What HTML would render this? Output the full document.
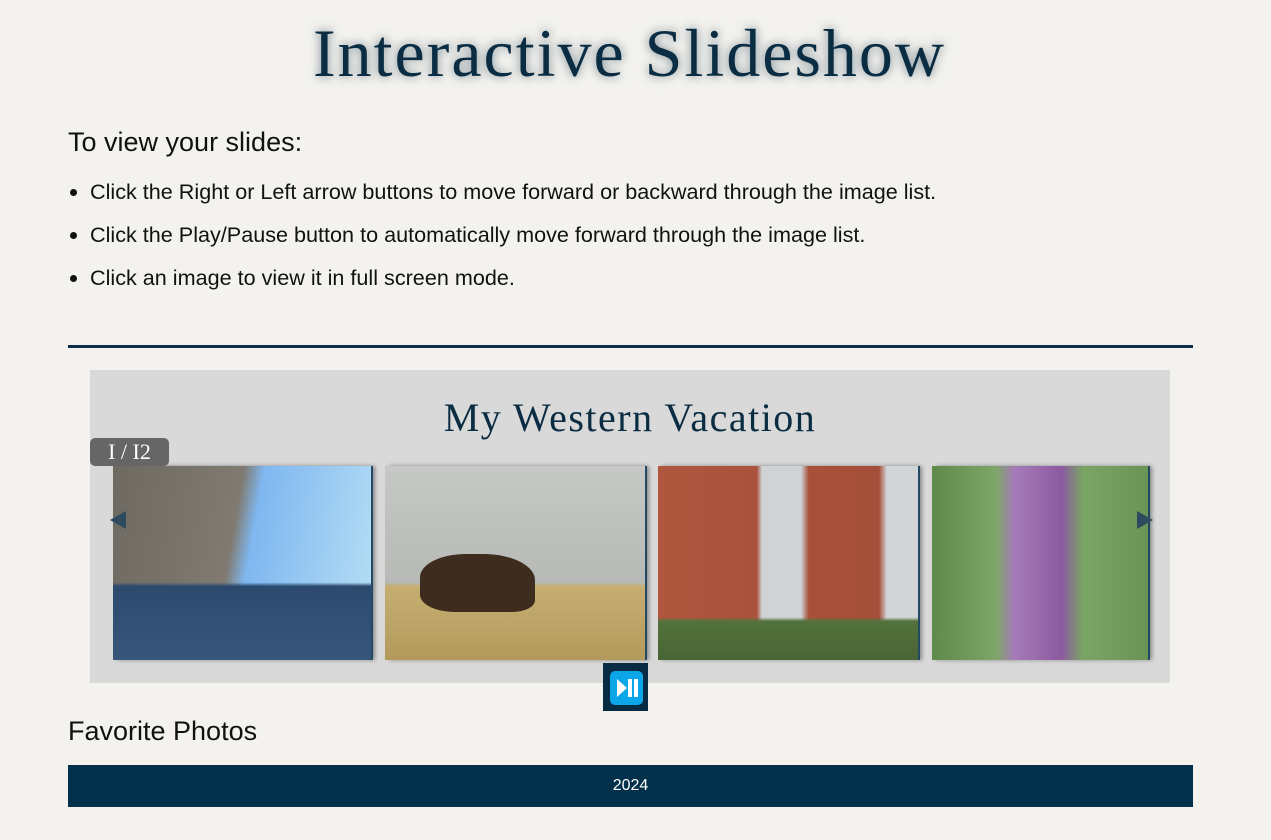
<!DOCTYPE html>
<html><head><style>
body{margin:0;background:#f3f2ee;font-family:"Liberation Sans",sans-serif;width:1271px;height:840px;overflow:hidden;position:relative}
h1{position:absolute;top:14px;left:0;width:1259px;text-align:center;margin:0;font:68px "Liberation Serif",serif;letter-spacing:2px;color:#0b2d43;text-shadow:0 0 10px rgba(20,50,70,.6)}
.h2{position:absolute;left:68px;top:127px;font-size:27px;color:#111}
ul{position:absolute;left:68px;top:180px;margin:0;padding-left:22px;font-size:21.6px;color:#111}
li{margin-bottom:19px;line-height:24px}
.hr{position:absolute;left:68px;top:345px;width:1125px;height:3px;background:#0d2f45}
.box{position:absolute;left:90px;top:370px;width:1080px;height:313px;background:#d9d9d9}
.st{position:absolute;left:0;width:1080px;top:24px;text-align:center;font:40px "Liberation Serif",serif;letter-spacing:1.5px;color:#0b2d43}
.cnt{position:absolute;left:90px;top:438px;width:79px;height:28px;background:#666;border-radius:5px;color:#fff;font:22px "Liberation Serif",serif;text-align:center;line-height:28px}
.img{position:absolute;top:466px;height:194px;box-shadow:2px 0 0 #244a63,4px 0 4px #888}
.arr{position:absolute;top:511px;width:0;height:0;border-top:9px solid transparent;border-bottom:9px solid transparent}
.pp{position:absolute;left:603px;top:663px;width:45px;height:48px;background:#082b44}
.fav{position:absolute;left:68px;top:716px;font-size:27px;color:#111}
.ft{position:absolute;left:68px;top:765px;width:1125px;height:42px;background:#03304a;color:#fff;text-align:center;line-height:42px;font-size:16px}
</style></head><body>
<h1>Interactive Slideshow</h1>
<div class="h2">To view your slides:</div>
<ul><li>Click the Right or Left arrow buttons to move forward or backward through the image list.</li>
<li>Click the Play/Pause button to automatically move forward through the image list.</li>
<li>Click an image to view it in full screen mode.</li></ul>
<div class="hr"></div>
<div class="box"><div class="st">My Western Vacation</div></div>
<div class="img" style="left:113px;width:258px;background:linear-gradient(180deg,transparent 0,transparent 60%,#2b4a6e 62%,#37567a 100%),linear-gradient(100deg,#6e6a62 0,#807a70 45%,#7fb7f0 52%,#b8e0f5 100%)"></div>
<div class="img" style="left:385px;width:260px;background:linear-gradient(180deg,#c6c8c6 0,#b7b9b6 60%,#c6ae72 62%,#b39a5c 100%)"><div style="position:absolute;left:35px;top:88px;width:115px;height:58px;background:#3e2c1f;border-radius:40% 45% 20% 30%"></div></div>
<div class="img" style="left:658px;width:260px;background:linear-gradient(180deg,transparent 0,transparent 78%,#53723c 80%,#4a6535 100%),linear-gradient(90deg,#b0563f 0,#a9533c 38%,#cfd3d6 40%,#cfd3d6 55%,#a85039 58%,#a44f3a 85%,#d2d5d8 88%)"></div>
<div class="img" style="left:932px;width:216px;background:linear-gradient(90deg,#5e8a4b 0,#7fa66a 30%,#a67bb8 38%,#8b5aa0 60%,#7aa565 70%,#6a9455 100%)"></div>
<div class="cnt">I / I2</div>
<div class="arr" style="left:110px;border-right:16px solid #2d4a5f"></div>
<div class="arr" style="left:1137px;border-left:16px solid #2d4a5f"></div>
<div class="pp"><svg width="45" height="48" viewBox="0 0 45 48"><rect x="7" y="8" width="33" height="34" rx="5" fill="#0aa6e8"/><path d="M14 16 L24 25 L14 34Z" fill="#fff"/><rect x="25" y="16" width="4" height="18" fill="#fff"/><rect x="31" y="16" width="4" height="18" fill="#fff"/></svg></div>
<div class="fav">Favorite Photos</div>
<div class="ft">2024</div>
</body></html>
